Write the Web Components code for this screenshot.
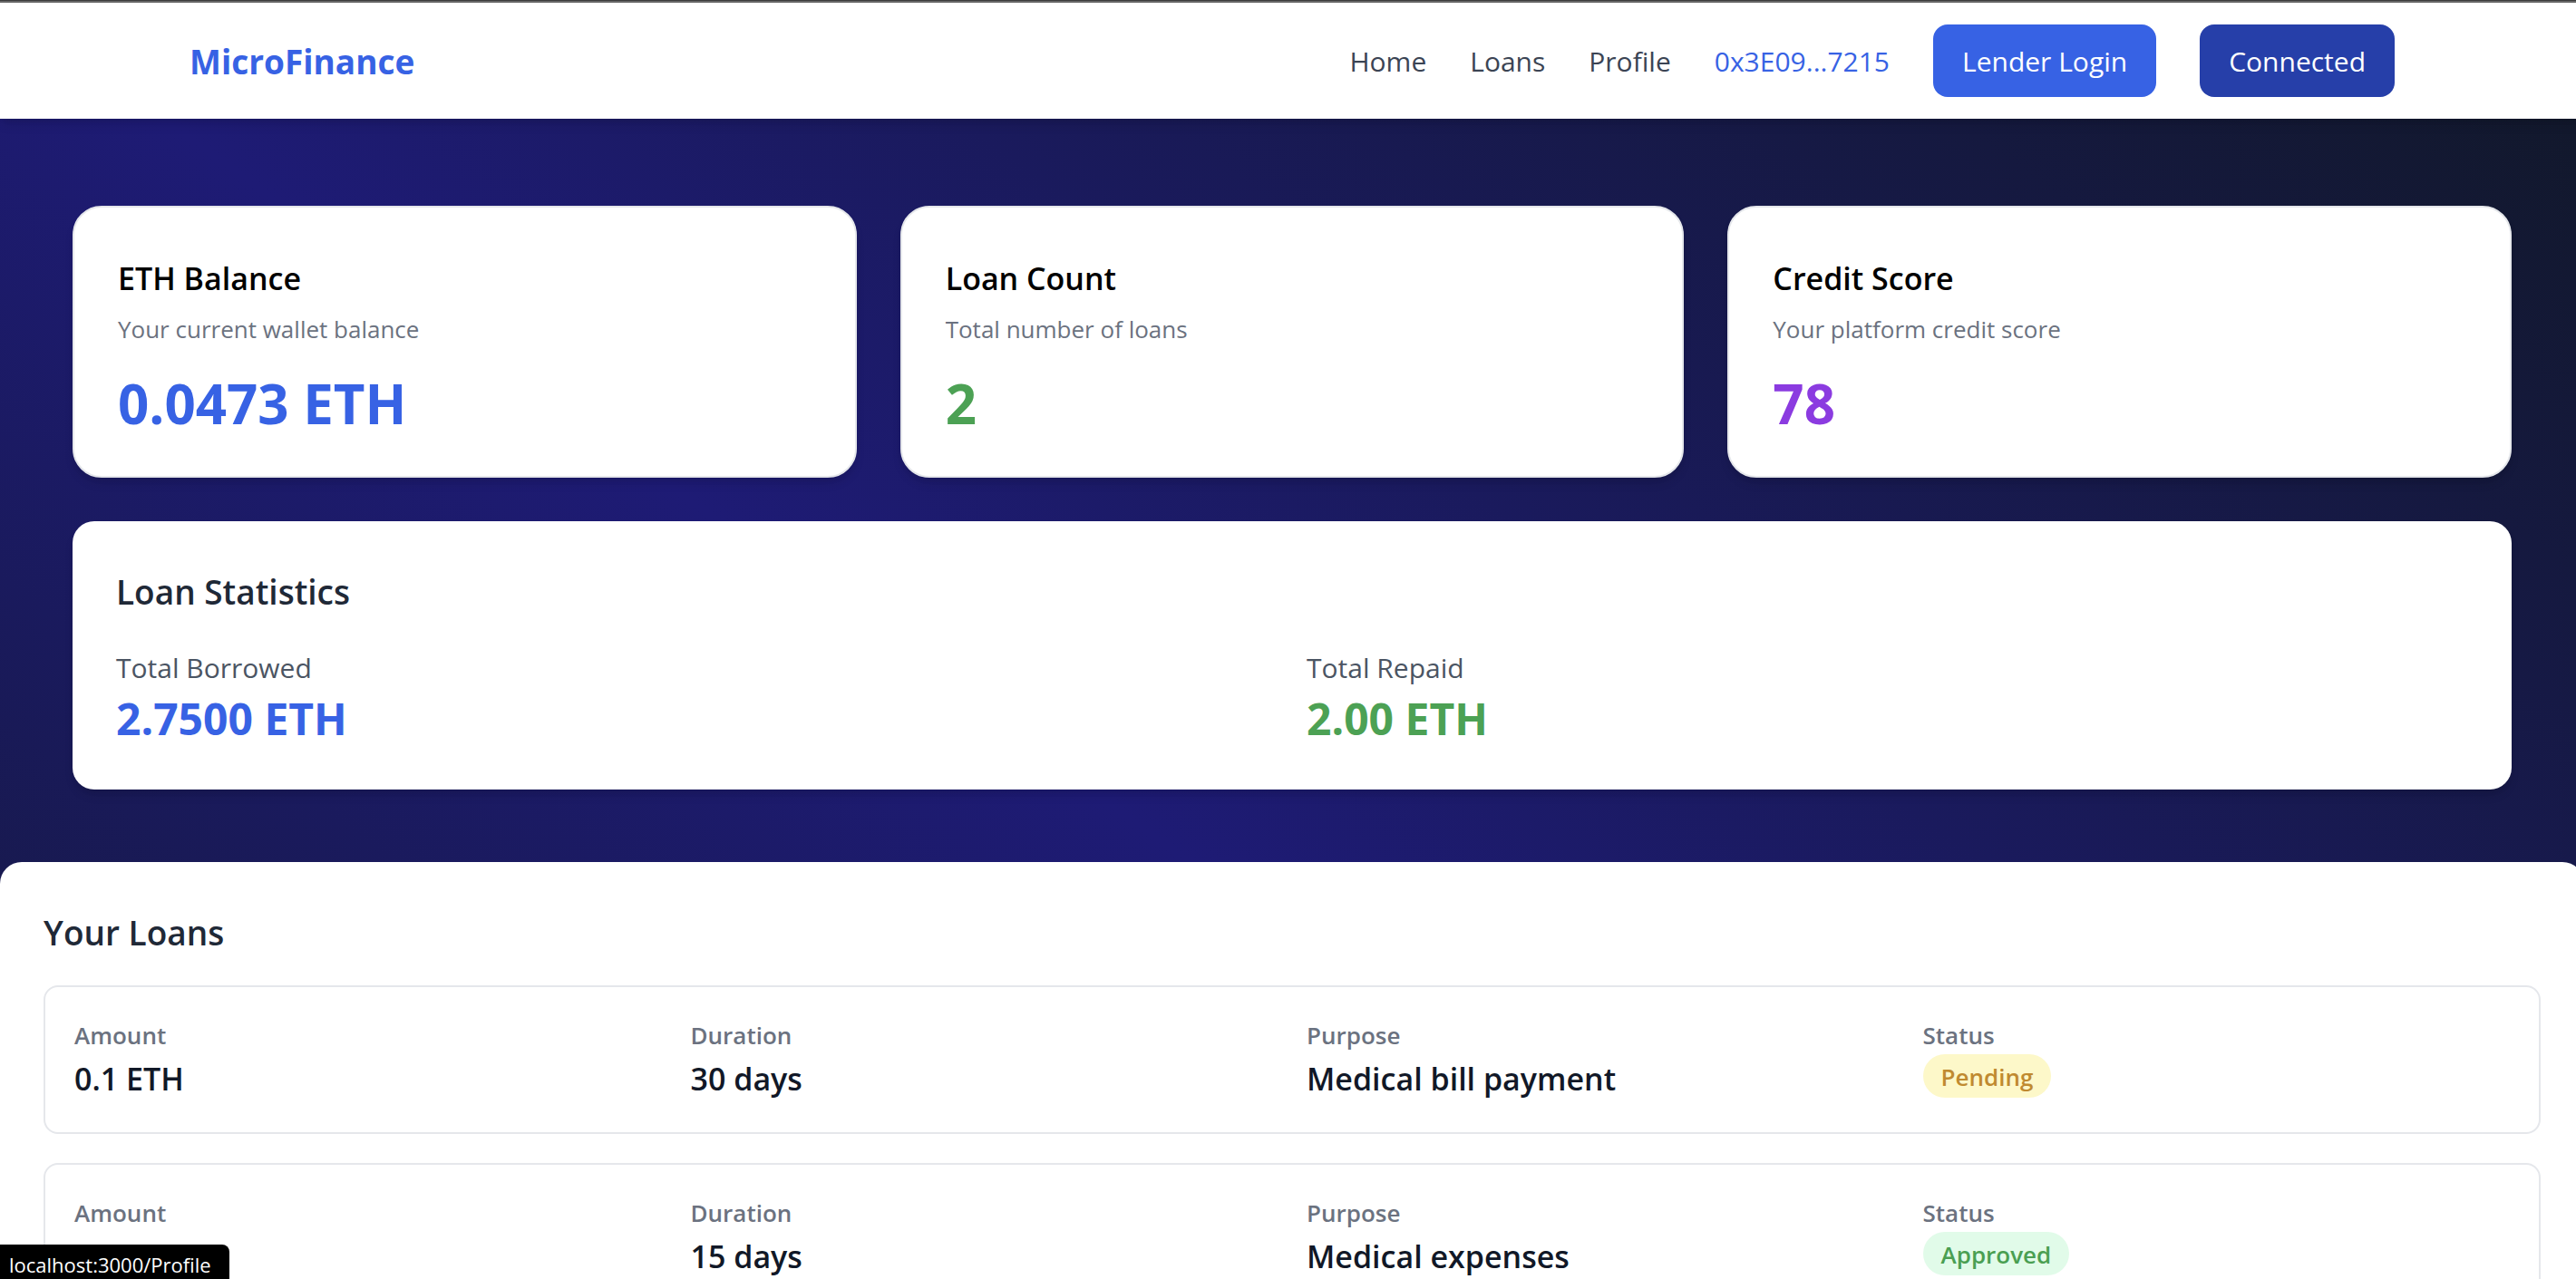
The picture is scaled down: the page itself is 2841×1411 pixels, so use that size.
<!DOCTYPE html>
<html lang="en">
<head>
<meta charset="utf-8">
<title>MicroFinance</title>
<style>
  html { overflow: hidden; }
  body {
    margin: 0;
    width: calc(100% + 9px);
    min-height: 100vh;
    font-family: "Open Sans", "Noto Sans", sans-serif;
    font-size: 30px;
    line-height: 48px;
    --blue: #3762e4;
    --blue-dark: #263fa9;
    --green: #4ca154;
    --purple: #8b3be0;
    --shadow: 0 8px 12px -2px rgb(0 0 0 / .1), 0 4px 8px -4px rgb(0 0 0 / .1);
  }
</style>
</head>
<body>
<micro-app></micro-app>
<status-bubble>localhost:3000/Profile</status-bubble>

<script>
class Base extends HTMLElement {
  connectedCallback() {
    if (this.shadowRoot) return;
    this.attachShadow({ mode: "open" }).innerHTML = this.render();
  }
}

customElements.define("nav-button", class extends Base {
  render() {
    return `<style>
      :host { display: block; }
      button {
        display: block; border: 0; margin: 0; padding: 16px 32px;
        border-radius: 16px; font: inherit; color: #fff; cursor: pointer;
        background: var(--button-color, var(--blue));
      }
      span { display: block; padding-top: 2px; line-height: 46px; }
    </style><button type="button"><span><slot></slot></span></button>`;
  }
});

customElements.define("site-header", class extends Base {
  render() {
    return `<style>
      :host { display: block; position: relative; background: #fff; box-shadow: var(--shadow); }
      .bar {
        display: flex; justify-content: space-between; align-items: center;
        max-width: 2432px; margin: 0 auto; padding: 24px 64px;
      }
      .logo {
        padding-top: 2px; font-size: 37px; font-weight: 700;
        color: var(--blue); text-decoration: none;
      }
      nav { display: flex; align-items: center; gap: 48px; }
      nav a, .address { padding-top: 2px; color: #3b4454; text-decoration: none; }
      nav .address { color: var(--blue); }
      .connected { --button-color: var(--blue-dark); }
    </style>
    <div class="bar">
      <a class="logo" href="#">MicroFinance</a>
      <nav>
        <a href="#">Home</a>
        <a href="#">Loans</a>
        <a href="#">Profile</a>
        <span class="address">0x3E09...7215</span>
        <nav-button>Lender Login</nav-button>
        <nav-button class="connected">Connected</nav-button>
      </nav>
    </div>`;
  }
});

customElements.define("metric-card", class extends Base {
  render() {
    return `<style>
      :host {
        display: block; box-sizing: border-box; padding: 50px 48px 44px;
        background: #fff; border: 2px solid #e5e7eb; border-radius: 32px;
        box-shadow: var(--shadow);
      }
      h3 { margin: 0; font-size: 34px; line-height: 56px; font-weight: 600; color: #000; }
      p { margin: 8px 0 26px; font-size: 26px; line-height: 40px; color: #6b7280; }
      .value { font-size: 60px; line-height: 72px; font-weight: 700; }
    </style>
    <h3><slot name="title"></slot></h3>
    <p><slot name="note"></slot></p>
    <div class="value"><slot></slot></div>`;
  }
});

customElements.define("stat-figure", class extends Base {
  render() {
    return `<style>
      :host { display: block; }
      .label { color: #4b5563; }
      .value { font-size: 48px; line-height: 64px; font-weight: 700; color: var(--figure-color); }
    </style>
    <div class="label">${this.getAttribute("label")}</div>
    <div class="value"><slot></slot></div>`;
  }
});

customElements.define("loan-statistics", class extends Base {
  render() {
    return `<style>
      :host {
        display: block; padding: 50px 48px 46px; background: #fff;
        border-radius: 24px; box-shadow: var(--shadow);
      }
      h2 { margin: 0 0 32px; font-size: 37px; line-height: 56px; font-weight: 600; color: #1f2937; }
      .grid { display: grid; grid-template-columns: 1fr 1fr; gap: 32px; }
      .borrowed { --figure-color: var(--blue); }
      .repaid { --figure-color: var(--green); }
    </style>
    <h2>Loan Statistics</h2>
    <div class="grid">
      <stat-figure class="borrowed" label="Total Borrowed">2.7500 ETH</stat-figure>
      <stat-figure class="repaid" label="Total Repaid">2.00 ETH</stat-figure>
    </div>`;
  }
});

customElements.define("status-badge", class extends Base {
  render() {
    return `<style>
      :host {
        display: inline-block; padding: 5px 20px 3px; border-radius: 24px;
        font-size: 26px; line-height: 40px; font-weight: 600;
        background: #fdf8c9; color: #c08a30;
      }
      :host([kind="approved"]) { background: #e1fbe9; color: #4a9f52; }
    </style><slot></slot>`;
  }
});

customElements.define("loan-item", class extends Base {
  render() {
    const get = name => this.getAttribute(name) || "";
    const status = get("status");
    return `<style>
      :host { display: block; padding: 32px; border: 2px solid #e5e7eb; border-radius: 16px; }
      dl { display: grid; grid-template-columns: repeat(4, 1fr); gap: 32px; margin: 0; }
      dt { font-size: 26px; line-height: 42px; font-weight: 600; color: #6b7280; }
      dd { margin: 0; font-size: 34px; line-height: 54px; font-weight: 600; color: #111827; }
      dd.status { display: flex; align-items: flex-start; }
    </style>
    <dl>
      <div><dt>Amount</dt><dd>${get("amount")}</dd></div>
      <div><dt>Duration</dt><dd>${get("duration")}</dd></div>
      <div><dt>Purpose</dt><dd>${get("purpose")}</dd></div>
      <div><dt>Status</dt><dd class="status"><status-badge kind="${status.toLowerCase()}">${status}</status-badge></dd></div>
    </dl>`;
  }
});

customElements.define("loan-list", class extends Base {
  render() {
    return `<style>
      :host { display: block; padding: 50px 48px 48px; background: #fff; border-radius: 24px; }
      h2 { margin: 0 0 30px; font-size: 37px; line-height: 56px; font-weight: 600; color: #1f2937; }
      .items { display: flex; flex-direction: column; gap: 32px; }
    </style>
    <h2>Your Loans</h2>
    <div class="items"><slot></slot></div>`;
  }
});

customElements.define("micro-app", class extends Base {
  render() {
    return `<style>
      :host {
        display: block; min-height: 100vh; border-top: 1px solid #3c3c3c;
        background: linear-gradient(to bottom left, #111827, #1e1b75, #111827) 0 0 / 100% 2063px no-repeat;
      }
      .edge { height: 2px; background: #666; }
      .hero { display: flex; flex-direction: column; gap: 48px; padding: 96px 80px 80px; }
      .cards { display: grid; grid-template-columns: repeat(3, 1fr); gap: 48px; }
      .blue { color: var(--blue); }
      .green { color: var(--green); }
      .purple { color: var(--purple); }
    </style>
    <div class="edge"></div>
    <site-header></site-header>
    <main>
      <section class="hero">
        <div class="cards">
          <metric-card><span slot="title">ETH Balance</span><span slot="note">Your current wallet balance</span><span class="blue">0.0473 ETH</span></metric-card>
          <metric-card><span slot="title">Loan Count</span><span slot="note">Total number of loans</span><span class="green">2</span></metric-card>
          <metric-card><span slot="title">Credit Score</span><span slot="note">Your platform credit score</span><span class="purple">78</span></metric-card>
        </div>
        <loan-statistics></loan-statistics>
      </section>
      <loan-list>
        <loan-item amount="0.1 ETH" duration="30 days" purpose="Medical bill payment" status="Pending"></loan-item>
        <loan-item duration="15 days" purpose="Medical expenses" status="Approved"></loan-item>
      </loan-list>
    </main>`;
  }
});

customElements.define("status-bubble", class extends Base {
  render() {
    return `<style>
      :host {
        position: fixed; left: 0; bottom: 0; padding: 6px 20px 0 10px;
        background: #000; color: #fff; border-top-right-radius: 8px;
        font-size: 22px; line-height: 32px;
      }
    </style><slot></slot>`;
  }
});
</script>
</body>
</html>
